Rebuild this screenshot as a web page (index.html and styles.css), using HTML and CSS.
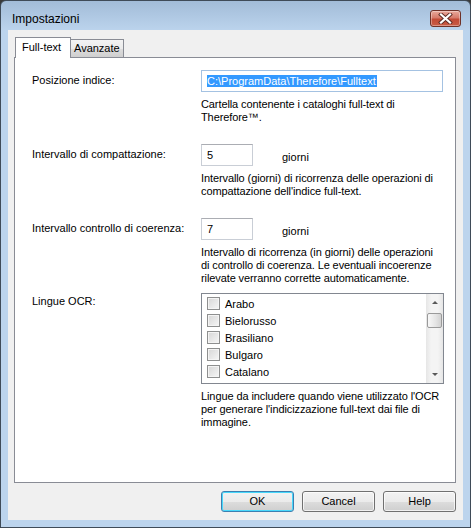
FILE: index.html
```html
<!DOCTYPE html>
<html lang="it">
<head>
  <meta charset="UTF-8" />
  <title>Impostazioni</title>
  <link rel="stylesheet" href="styles.css">
</head>
<body>
  <div class="window">
    <div class="title-bar">
      <span class="title">Impostazioni</span>
      <div class="close-btn">
        <svg width="15" height="11" viewBox="0 0 15 11">
          <path d="M3 1.5 L12 9.5 M12 1.5 L3 9.5" stroke="#5a2a24" stroke-width="4" stroke-linecap="square" fill="none"/>
          <path d="M3 1.5 L12 9.5 M12 1.5 L3 9.5" stroke="#fff" stroke-width="2.2" stroke-linecap="square" fill="none"/>
        </svg>
      </div>
    </div>
    <div class="client">
      <div class="tabs">
        <div class="tab active">Full-text</div>
        <div class="tab">Avanzate</div>
      </div>
      <div class="panel">
        <div class="field">
          <div class="field-label">Posizione indice:</div>
          <div class="field-body">
            <div class="textbox wide focused"><span class="selected">C:\ProgramData\Therefore\Fulltext</span></div>
            <div class="desc">Cartella contenente i cataloghi full-text di<br>Therefore™.</div>
          </div>
        </div>
        <div class="field">
          <div class="field-label">Intervallo di compattazione:</div>
          <div class="field-body">
            <div class="inline-row">
              <div class="textbox short">5</div>
              <span class="unit">giorni</span>
            </div>
            <div class="desc">Intervallo (giorni) di ricorrenza delle operazioni di<br>compattazione dell'indice full-text.</div>
          </div>
        </div>
        <div class="field field-tight">
          <div class="field-label">Intervallo controllo di coerenza:</div>
          <div class="field-body">
            <div class="inline-row">
              <div class="textbox short">7</div>
              <span class="unit">giorni</span>
            </div>
            <div class="desc">Intervallo di ricorrenza (in giorni) delle operazioni<br>di controllo di coerenza. Le eventuali incoerenze<br>rilevate verranno corrette automaticamente.</div>
          </div>
        </div>
        <div class="field">
          <div class="field-label label-list">Lingue OCR:</div>
          <div class="field-body">
            <div class="listbox">
              <div class="list-items">
                <div class="list-item"><span class="checkbox"></span>Arabo</div>
                <div class="list-item"><span class="checkbox"></span>Bielorusso</div>
                <div class="list-item"><span class="checkbox"></span>Brasiliano</div>
                <div class="list-item"><span class="checkbox"></span>Bulgaro</div>
                <div class="list-item"><span class="checkbox"></span>Catalano</div>
              </div>
              <div class="scrollbar">
                <span class="arrow arrow-up"></span>
                <span class="thumb"></span>
                <span class="arrow arrow-down"></span>
              </div>
            </div>
            <div class="desc">Lingue da includere quando viene utilizzato l'OCR<br>per generare l'indicizzazione full-text dai file di<br>immagine.</div>
          </div>
        </div>
      </div>
      <div class="buttons">
        <div class="button default">OK</div>
        <div class="button">Cancel</div>
        <div class="button">Help</div>
      </div>
    </div>
  </div>
</body>
</html>
```

FILE: styles.css
```css
body {
  margin: 0;
  background: #3a3a3a;
  font-family: "Liberation Sans", Arial, sans-serif;
  font-size: 11px;
  color: #000;
}
.window {
  width: 469px;
  height: 526px;
  border: 1px solid #3f4b58;
  border-radius: 6px 6px 0 0;
  background: linear-gradient(#a2bcd8, #bcd4ed 30px, #bcd4ed);
  display: flex;
  flex-direction: column;
}
.title-bar {
  height: 29px;
  display: flex;
  align-items: flex-start;
  justify-content: space-between;
}
.title {
  font-size: 12px;
  margin: 11px 0 0 11px;
  line-height: 14px;
}
.close-btn {
  width: 29px;
  height: 15px;
  margin: 9px 9px 0 0;
  border: 1px solid #6e3128;
  border-radius: 3px;
  background: linear-gradient(#e9a99c, #d67a6a 45%, #c24a36 55%, #c95c45);
  box-shadow: inset 0 0 0 1px rgba(255,255,255,0.35);
  display: flex;
  align-items: center;
  justify-content: center;
}
.close-btn svg {
  display: block;
}
.client {
  margin: 0 7px;
  height: 490px;
  background: #f0f0f0;
  padding: 7px 7px 0 6px;
  box-sizing: border-box;
}
.tabs {
  display: flex;
  align-items: flex-end;
  margin-left: 1px;
  margin-bottom: -1px;
  position: relative;
  z-index: 1;
}
.tab {
  box-sizing: border-box;
  border: 1px solid #898c95;
  border-bottom: none;
  height: 18px;
  margin-bottom: 1px;
  margin-left: -1px;
  width: 54px;
  padding-left: 3px;
  line-height: 17px;
  background: linear-gradient(#f3f3f3, #ebebeb 50%, #dddddd 51%, #cfcfcf);
}
.tab.active {
  width: 56px;
  height: 21px;
  margin-left: 0;
  margin-bottom: 0;
  padding-left: 6px;
  line-height: 18px;
  background: #fff;
  position: relative;
  z-index: 2;
}
.panel {
  height: 426px;
  border: 1px solid #898c95;
  background: #fff;
  padding: 12px 0 0 17px;
  box-sizing: border-box;
}
.field {
  display: flex;
  margin-bottom: 20px;
}
.field-tight {
  margin-bottom: 8px;
}
.field-label {
  width: 169px;
  padding-top: 4px;
  line-height: 13px;
  flex-shrink: 0;
}
.label-list {
  padding-top: 2px;
}
.field-body {
  width: 243px;
}
.textbox {
  box-sizing: border-box;
  height: 22px;
  border: 1px solid #c9ced6;
  border-top-color: #abadb3;
  padding: 3px 0 0 5px;
  line-height: 14px;
  background: #fff;
}
.textbox.wide {
  width: 242px;
}
.textbox.focused {
  border-color: #a4c2e2;
}
.textbox.short {
  width: 52px;
}
.selected {
  background: #3399ff;
  color: #fff;
  padding-right: 1px;
}
.inline-row {
  display: flex;
  align-items: center;
}
.unit {
  margin-left: 29px;
  padding-top: 3px;
}
.desc {
  margin-top: 6px;
  line-height: 13px;
  letter-spacing: -0.1px;
  white-space: nowrap;
}
.listbox {
  box-sizing: border-box;
  width: 243px;
  height: 91px;
  border: 1px solid #828790;
  display: flex;
}
.list-items {
  flex: 1;
  padding: 1px 0 0 5px;
}
.list-item {
  height: 17px;
  display: flex;
  align-items: center;
}
.checkbox {
  box-sizing: border-box;
  width: 13px;
  height: 13px;
  border: 1px solid #8e8f8f;
  background: linear-gradient(135deg, #d6d6d6, #f6f6f6);
  box-shadow: inset 0 0 0 1px #f4f4f4;
  margin-right: 5px;
}
.scrollbar {
  width: 17px;
  background: linear-gradient(90deg, #e6e6e6, #f4f4f4 30%, #f4f4f4 70%, #e6e6e6);
  position: relative;
}
.arrow {
  position: absolute;
  left: 6px;
  width: 0;
  height: 0;
  border-left: 3px solid transparent;
  border-right: 3px solid transparent;
}
.arrow-up {
  top: 7px;
  border-bottom: 3px solid #5a5a5a;
}
.arrow-down {
  bottom: 7px;
  border-top: 3px solid #5a5a5a;
}
.thumb {
  position: absolute;
  top: 19px;
  left: 1px;
  box-sizing: border-box;
  width: 15px;
  height: 15px;
  border: 1px solid #9a9a9a;
  border-radius: 2px;
  background: linear-gradient(90deg, #f8f8f8, #e4e4e4 60%, #d2d2d2);
}
.buttons {
  display: flex;
  justify-content: flex-end;
  gap: 8px;
  margin-top: 8px;
}
.button {
  box-sizing: border-box;
  width: 73px;
  height: 21px;
  border: 1px solid #707070;
  border-radius: 3px;
  background: linear-gradient(#f2f2f2, #ebebeb 50%, #dddddd 51%, #cfcfcf);
  box-shadow: inset 0 0 0 1px rgba(255,255,255,0.7);
  text-align: center;
  line-height: 19px;
}
.button.default {
  border-color: #3c7fb1;
  box-shadow: inset 0 0 0 1px #48d8fb;
}
```
